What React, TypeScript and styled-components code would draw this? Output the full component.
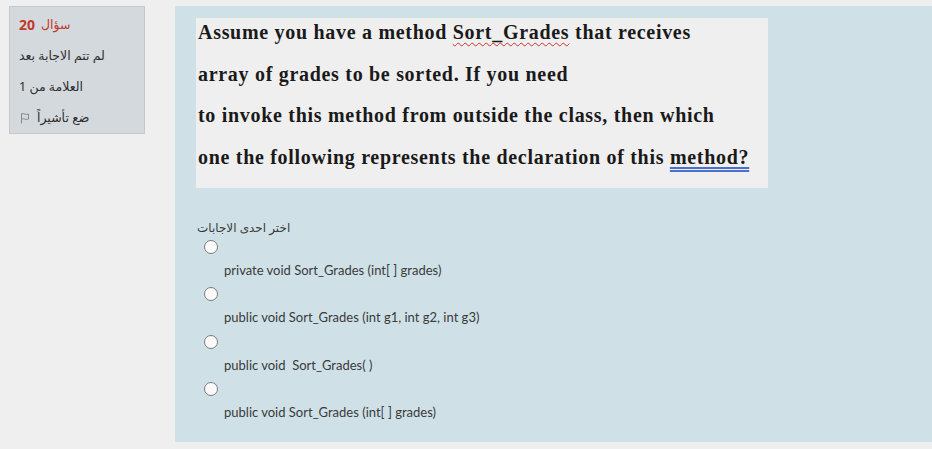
import React from 'react';
import styled, { createGlobalStyle } from 'styled-components';

const GlobalStyle = createGlobalStyle`
  html, body {
    margin: 0;
    padding: 0;
    background: #efefef;
  }
`;

const Page = styled.div`
  display: flex;
  align-items: flex-start;
  gap: 30px;
  padding: 6px 0 0 9px;
  height: 449px;
  box-sizing: border-box;
  font-family: 'Lato', 'Noto Sans', 'DejaVu Sans', sans-serif;
`;

const InfoBox = styled.div`
  width: 136px;
  height: 128px;
  box-sizing: border-box;
  background: #d4d9dd;
  border: 1px solid #c4c8cc;
  padding: 7px 0 0 9px;
  display: flex;
  flex-direction: column;
  gap: 9px;
`;

const InfoRow = styled.div<{ $color?: string }>`
  direction: rtl;
  height: 22px;
  line-height: 22px;
  font-size: 12.5px;
  color: ${p => p.$color || '#2e2e2e'};
  font-family: 'Noto Sans', 'DejaVu Sans', sans-serif;
  display: flex;
  justify-content: flex-end;
  align-items: center;
  gap: 6px;
`;

const QuestionNo = styled.b`
  font-size: 14px;
  font-weight: 700;
`;

const Panel = styled.div`
  flex: 1;
  height: 436px;
  background: #cfe1e7;
  padding: 12px 0 0 21px;
  box-sizing: border-box;
`;

const QuestionBox = styled.div`
  width: 572px;
  height: 170px;
  box-sizing: border-box;
  background: #efefef;
  padding: 0 0 0 2px;
  font-family: 'Liberation Serif', 'Times New Roman', serif;
  font-weight: 700;
  font-size: 20px;
  letter-spacing: 0.7px;
  color: #1a1a1a;
`;

const QuestionLine = styled.p`
  margin: 0 0 13.6px;
  line-height: 28px;
  white-space: nowrap;
`;

const Misspelled = styled.span`
  text-decoration: underline wavy #d03030;
  text-decoration-thickness: 1px;
  text-underline-offset: 3px;
`;

const Grammar = styled.span`
  text-decoration: underline double #4a6fd0;
  text-underline-offset: 3px;
`;

const Answers = styled.div`
  margin-top: 31px;
  padding-left: 1px;
`;

const Prompt = styled.div`
  direction: rtl;
  display: flex;
  justify-content: flex-end;
  width: max-content;
  white-space: nowrap;
  font-family: 'Noto Sans', 'DejaVu Sans', sans-serif;
  font-size: 12px;
  line-height: 18px;
  color: #3a3a3a;
`;

const Option = styled.label`
  display: flex;
  flex-direction: column;
  padding-left: 7px;
  height: 47.3px;
`;

const Radio = styled.span`
  display: block;
  width: 12px;
  height: 12px;
  margin-top: 3px;
  border-radius: 50%;
  border: 1px solid #7a7a7a;
  background: #fafafa;
`;

const OptionText = styled.span`
  margin: 8px 0 0 20px;
  font-size: 13px;
  line-height: 16px;
  color: #3a3a3a;
  white-space: pre;
`;

const FlagIcon = () => (
  <svg width="12" height="12" viewBox="0 0 12 12" fill="none" stroke="#888" strokeWidth="1">
    <path d="M2.5 1.5v10" />
    <path d="M2.5 2c2.5-1.2 4 1.4 7 0v5c-3 1.4-4.5-1.2-7 0" />
  </svg>
);

const options = [
  'private void Sort_Grades (int[ ] grades)',
  'public void Sort_Grades (int g1, int g2, int g3)',
  'public void  Sort_Grades( )',
  'public void Sort_Grades (int[ ] grades)',
];

const App: React.FC = () => (
  <>
    <GlobalStyle />
    <Page>
      <InfoBox>
        <InfoRow $color="#c0392b">
          <span>سؤال</span>
          <QuestionNo>20</QuestionNo>
        </InfoRow>
        <InfoRow>لم تتم الاجابة بعد</InfoRow>
        <InfoRow>العلامة من 1</InfoRow>
        <InfoRow>
          <span>ضع تأشيراً</span>
          <FlagIcon />
        </InfoRow>
      </InfoBox>

      <Panel>
        <QuestionBox>
          <QuestionLine>
            Assume you have a method <Misspelled>Sort_Grades</Misspelled> that receives
          </QuestionLine>
          <QuestionLine>array of grades to be sorted. If you need</QuestionLine>
          <QuestionLine>to invoke this method from outside the class, then which</QuestionLine>
          <QuestionLine>
            one the following represents the declaration of this <Grammar>method?</Grammar>
          </QuestionLine>
        </QuestionBox>

        <Answers>
          <Prompt>اختر احدى الاجابات</Prompt>
          {options.map(text => (
            <Option key={text}>
              <Radio />
              <OptionText>{text}</OptionText>
            </Option>
          ))}
        </Answers>
      </Panel>
    </Page>
  </>
);

export default App;
